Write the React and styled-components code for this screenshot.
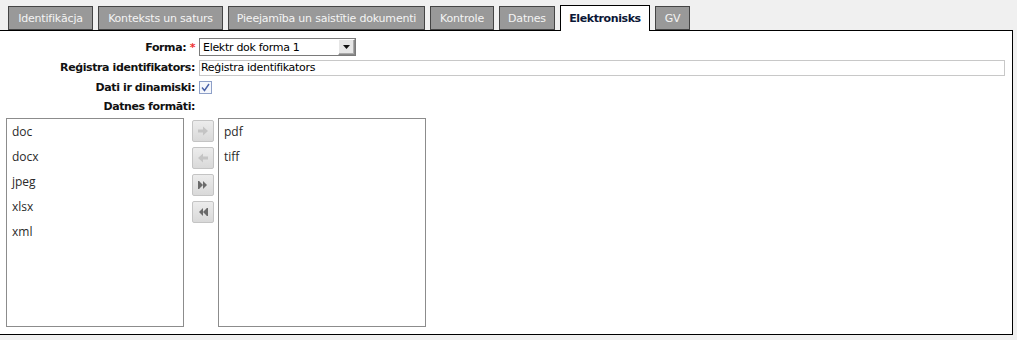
import React from "react";
import styled, { createGlobalStyle } from "styled-components";

const GlobalStyle = createGlobalStyle`
  html, body {
    margin: 0;
    padding: 0;
    background: #f0f0f0;
  }
  body {
    font-family: "DejaVu Sans", Verdana, sans-serif;
  }
`;

const tabs = [
  { label: "Identifikācja", w: 85 },
  { label: "Konteksts un saturs", w: 125 },
  { label: "Pieejamība un saistītie dokumenti", w: 197 },
  { label: "Kontrole", w: 64 },
  { label: "Datnes", w: 56 },
  { label: "Elektronisks", w: 90, active: true },
  { label: "GV", w: 35 },
];

const available = ["doc", "docx", "jpeg", "xlsx", "xml"];
const chosen = ["pdf", "tiff"];

function Arrow({ dir, double, light }) {
  const c = light ? "#c4c4c4" : "#6a6a6a";
  const flip = dir === "left" ? "scale(-1,1) translate(-12,0)" : "";
  if (double) {
    return (
      <svg width="12" height="10" viewBox="0 0 12 10">
        <g transform={flip}>
          <path d="M2 1 L6 5 L2 9 Z" fill={c} />
          <path d="M6 1 L10 5 L6 9 Z" fill={c} />
          <rect x="1" y="1" width="1.2" height="8" fill={c} />
        </g>
      </svg>
    );
  }
  return (
    <svg width="12" height="10" viewBox="0 0 12 10">
      <g transform={flip}>
        <rect x="1" y="3.5" width="6" height="3" fill={c} />
        <path d="M6 0.5 L11 5 L6 9.5 Z" fill={c} />
      </g>
    </svg>
  );
}

export default function App() {
  return (
    <>
      <GlobalStyle />
      <Page>
        <TabBar>
          {tabs.map((t) => (
            <Tab key={t.label} $active={t.active} $w={t.w}>{t.label}</Tab>
          ))}
        </TabBar>
        <Panel>
          <Form>
            <Label>Forma: <Req>*</Req></Label>
            <Select>
              <span>Elektr dok forma 1</span>
              <DropButton><svg width="7" height="4" viewBox="0 0 7 4"><path d="M0 0 H7 L3.5 4 Z" fill="#111" /></svg></DropButton>
            </Select>
            <Label>Reģistra identifikators:</Label>
            <TextInput>Reģistra identifikators</TextInput>
            <Label>Dati ir dinamiski:</Label>
            <Check>
              <svg width="9" height="9" viewBox="0 0 9 9"><path d="M1 4.5 L3.5 7.5 L8 1" stroke="#4a62a8" strokeWidth="1.4" fill="none" /></svg>
            </Check>
            <Label>Datnes formāti:</Label>
            <span />
          </Form>
          <Picker>
            <ListBox $w={178}>
              {available.map((i) => <Item key={i}>{i}</Item>)}
            </ListBox>
            <Buttons>
              <MoveButton><Arrow dir="right" light /></MoveButton>
              <MoveButton><Arrow dir="left" light /></MoveButton>
              <MoveButton><Arrow dir="right" double /></MoveButton>
              <MoveButton><Arrow dir="left" double /></MoveButton>
            </Buttons>
            <ListBox $w={208}>
              {chosen.map((i) => <Item key={i}>{i}</Item>)}
            </ListBox>
          </Picker>
        </Panel>
      </Page>
    </>
  );
}

const Page = styled.div`
  width: 1017px;
  height: 340px;
  background: #f0f0f0;
`;

const TabBar = styled.div`
  display: flex;
  align-items: flex-end;
  gap: 5px;
  padding-left: 8px;
  height: 31px;
  position: relative;
  z-index: 1;
`;

const Tab = styled.div`
  box-sizing: border-box;
  width: ${(p) => p.$w}px;
  height: ${(p) => (p.$active ? "26px" : "24px")};
  margin-bottom: ${(p) => (p.$active ? "0" : "1px")};
  display: flex;
  align-items: center;
  justify-content: center;
  font-size: 11px;
  font-weight: ${(p) => (p.$active ? "bold" : "normal")};
  letter-spacing: ${(p) => (p.$active ? "-0.4px" : "-0.2px")};
  color: ${(p) => (p.$active ? "#0b1636" : "#f4f4f4")};
  background: ${(p) => (p.$active ? "#fff" : "#999")};
  border: 1px solid ${(p) => (p.$active ? "#000" : "#444")};
  border-bottom: ${(p) => (p.$active ? "none" : "1px solid #444")};
  white-space: nowrap;
`;

const Panel = styled.div`
  box-sizing: border-box;
  margin-top: -1px;
  width: 1013px;
  height: 305px;
  background: #fff;
  border: 1px solid #000;
  border-left: none;
  padding-top: 7px;
`;

const Form = styled.div`
  display: grid;
  grid-template-columns: 195px 806px;
  grid-template-rows: 18px 17px 16px 16px;
  column-gap: 4px;
  row-gap: 3px;
  align-items: center;
`;

const Label = styled.div`
  text-align: right;
  font-size: 11px;
  font-weight: bold;
  letter-spacing: -0.4px;
  color: #111;
  white-space: nowrap;
`;

const Req = styled.span`
  color: #e33;
`;

const Select = styled.div`
  box-sizing: border-box;
  width: 157px;
  height: 18px;
  border: 1px solid #7a7a7a;
  background: #fff;
  display: flex;
  align-items: center;
  justify-content: space-between;
  padding-left: 3px;
  font-size: 11px;
  letter-spacing: -0.3px;
  color: #000;
`;

const DropButton = styled.div`
  box-sizing: border-box;
  width: 17px;
  height: 16px;
  background: #e6e6e6;
  border: 1px solid #888;
  border-top-color: #fff;
  border-left-color: #fff;
  box-shadow: inset -1px -1px 0 #aaa;
  display: flex;
  align-items: center;
  justify-content: center;
`;

const TextInput = styled.div`
  box-sizing: border-box;
  height: 16px;
  border: 1px solid #c8c8c8;
  padding-left: 1px;
  font-size: 11px;
  letter-spacing: -0.3px;
  color: #000;
  display: flex;
  align-items: center;
`;

const Check = styled.div`
  box-sizing: border-box;
  width: 13px;
  height: 13px;
  border: 1px solid #8ea0c8;
  background: #f5f7fc;
  display: flex;
  align-items: center;
  justify-content: center;
`;

const Picker = styled.div`
  display: flex;
  align-items: flex-start;
  margin-top: 4px;
  padding-left: 6px;
`;

const ListBox = styled.div`
  box-sizing: border-box;
  width: ${(p) => p.$w}px;
  height: 209px;
  border: 1px solid #8c8c8c;
  padding: 3px 5px;
  display: flex;
  flex-direction: column;
`;

const Item = styled.div`
  height: 25px;
  line-height: 20px;
  font-family: "Open Sans", sans-serif;
  font-size: 12px;
  color: #2a2a2a;
`;

const Buttons = styled.div`
  display: flex;
  flex-direction: column;
  gap: 5px;
  padding: 2px 4px 0 8px;
`;

const MoveButton = styled.div`
  box-sizing: border-box;
  width: 22px;
  height: 22px;
  border: 1px solid #c4c4c4;
  border-radius: 2px;
  background: linear-gradient(#ececec, #d9d9d9);
  display: flex;
  align-items: center;
  justify-content: center;
`;
